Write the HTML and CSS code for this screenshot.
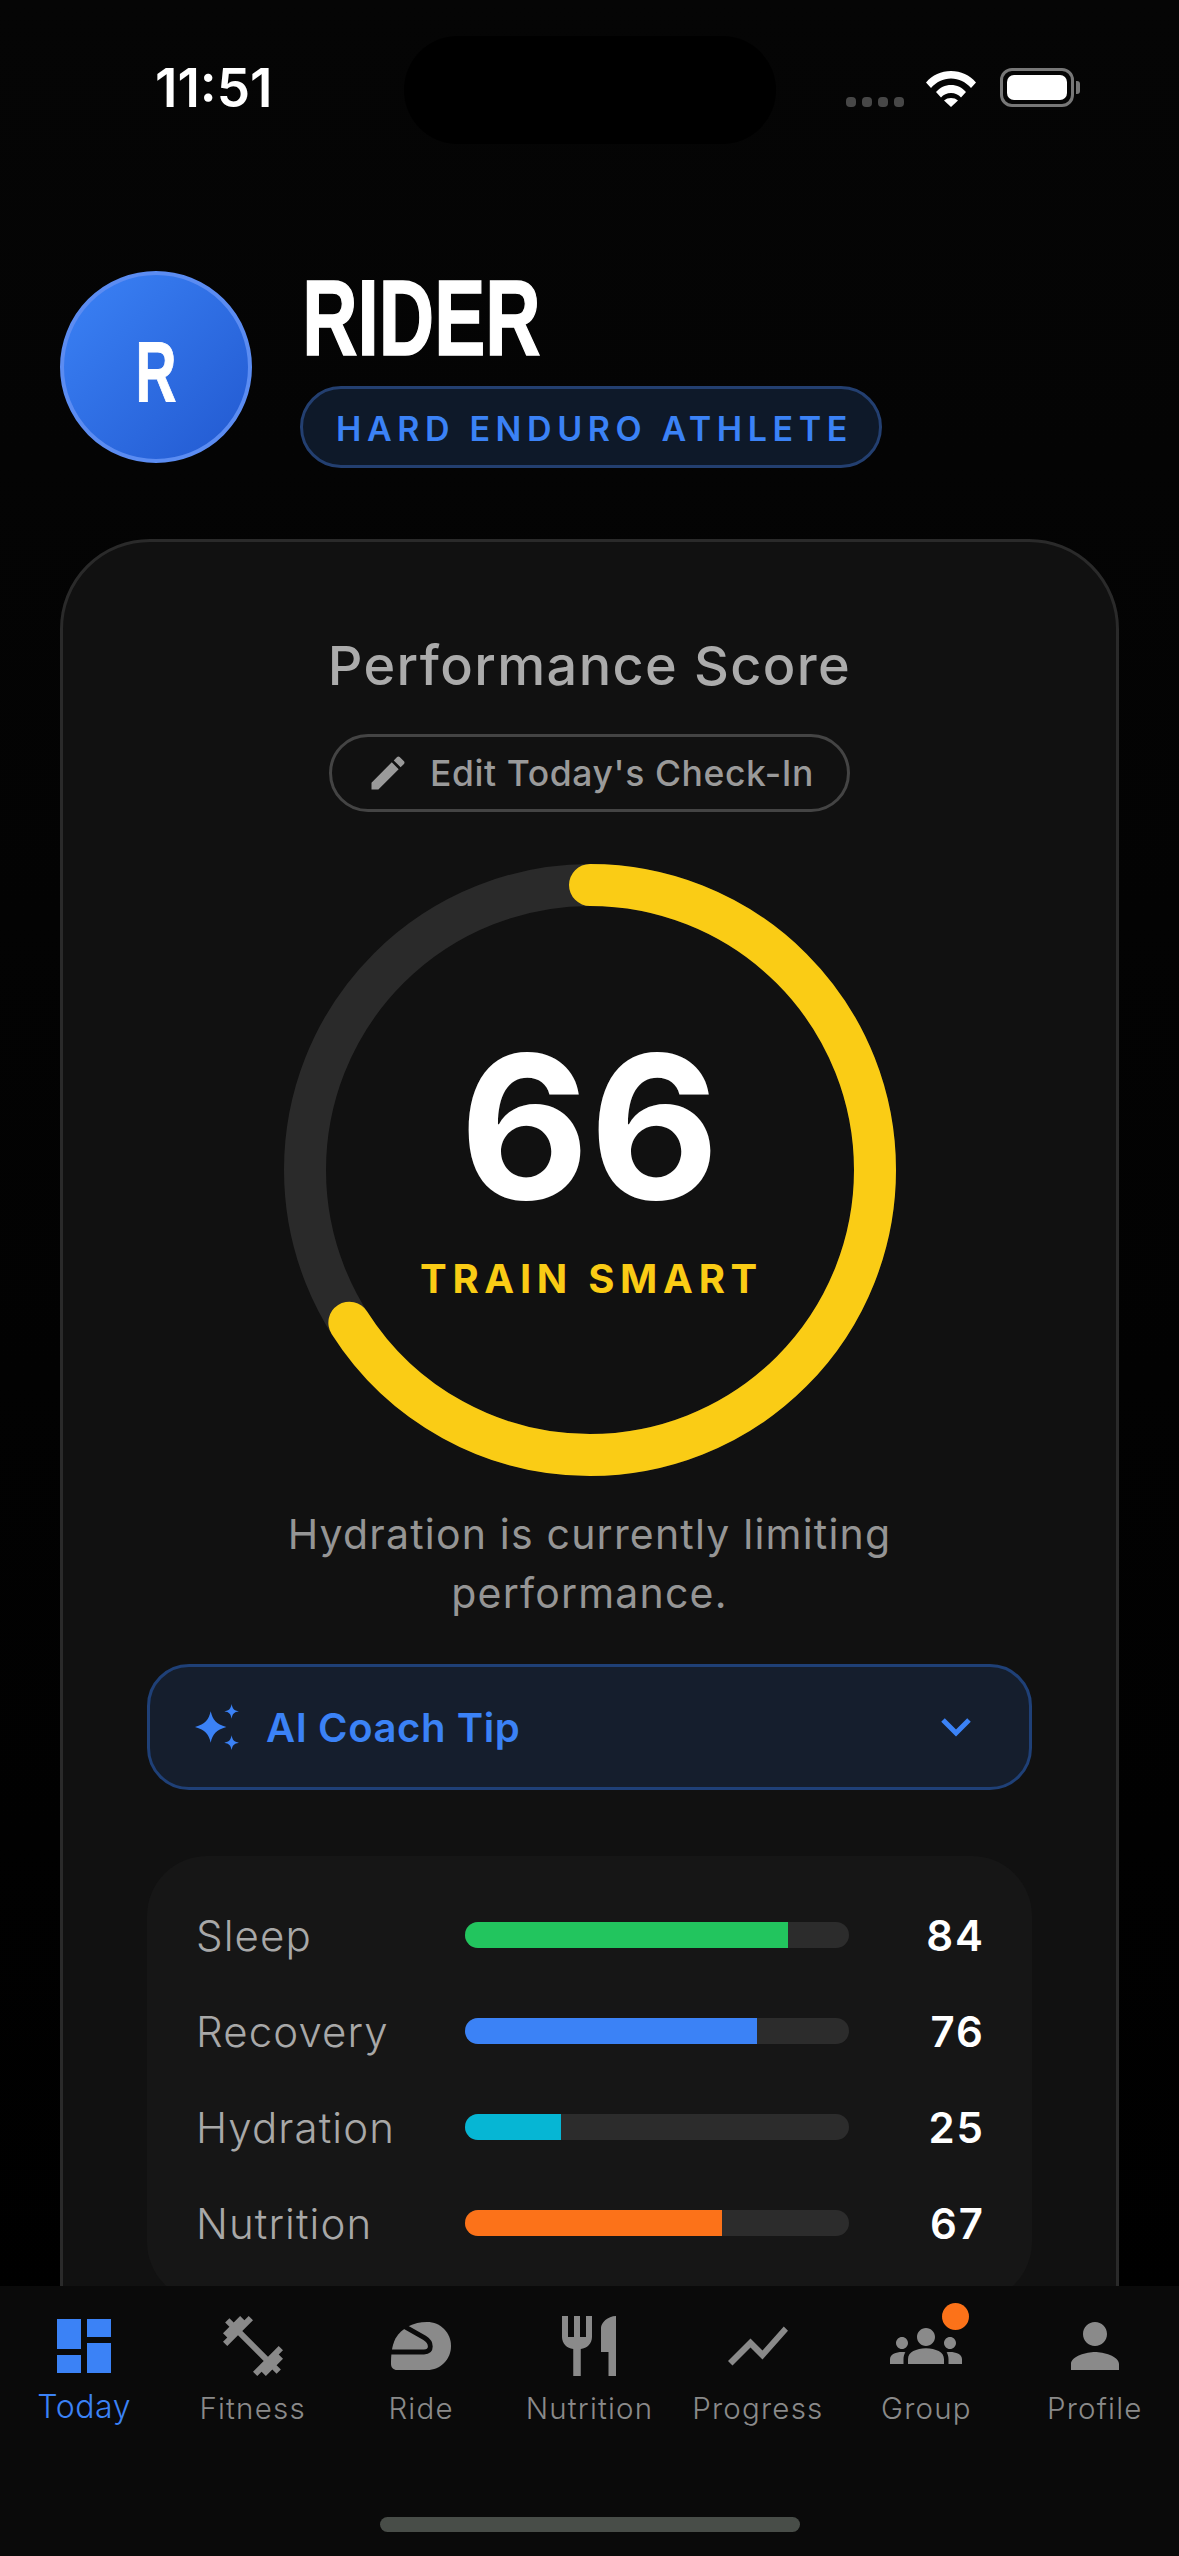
FILE: index.html
```html
<!DOCTYPE html>
<html lang="en">
<head>
    <meta charset="UTF-8">
    <meta name="viewport" content="width=device-width, initial-scale=1.0">
    <title>Today</title>
    <link rel="stylesheet" href="styles.css">
</head>
<body>

<div class="phone">
    <div class="status-bar">
        <div class="status-time">11:51</div>
        <div class="status-island"></div>
        <div class="status-icons">
            <div class="signal-dots"><span></span><span></span><span></span><span></span></div>
            <svg class="wifi" viewBox="0 0 50 37">
                <path d="M0 12.500C6.500 5 15 1 25 1s18.500 4 25 11.500l-5 5.500C39.500 12 33 8.500 25 8.500S10.500 12 5 18z" fill="#fff"/>
                <path d="M10 22c4-4.500 9-7 15-7s11 2.500 15 7l-5 5.500c-2.500-3-6-4.500-10-4.500s-7.500 1.500-10 4.500z" fill="#fff"/>
                <path d="M18 30.500c2-1.700 4.300-2.500 7-2.500s5 .8 7 2.500L25 37z" fill="#fff"/>
            </svg>
            <div class="battery"><div class="battery-level"></div></div>
            <div class="battery-nub"></div>
        </div>
    </div>

    <div class="header">
        <div class="avatar"><span>R</span></div>
        <div class="header-text">
            <div class="rider-name">RIDER</div>
            <div class="rider-badge">HARD ENDURO ATHLETE</div>
        </div>
    </div>

    <div class="score-card">
        <div class="score-title">Performance Score</div>
        <button class="edit-button">
            <svg viewBox="0 0 24 24"><path d="M3 17.250V21h3.750L17.810 9.940l-3.750-3.750L3 17.250zM20.710 7.040c.39-.39.39-1.020 0-1.410l-2.340-2.340c-.39-.39-1.020-.39-1.410 0l-1.830 1.830 3.750 3.750 1.830-1.830z"/></svg>
            <span>Edit Today's Check-In</span>
        </button>

        <div class="score-ring">
            <svg viewBox="0 0 612 612">
                <circle class="ring-track" cx="306" cy="306" r="285"/>
                <circle class="ring-value" cx="306" cy="306" r="285" pathLength="100" stroke-dasharray="66 100" transform="rotate(-90 306 306)"/>
            </svg>
            <div class="ring-text">
                <div class="ring-number">66</div>
                <div class="ring-label">TRAIN SMART</div>
            </div>
        </div>

        <div class="score-note">Hydration is currently limiting<br>performance.</div>

        <div class="coach-tip">
            <svg class="coach-star" viewBox="0 0 44 44">
                <path d="M15 7c2 8.500 5 12 15 15-10 3-13 6.500-15 15-2-8.500-5-12-15-15 10-3 13-6.500 15-15z"/>
                <path d="M35 0c.9 4.700 2.300 6.100 7 7-4.700.9-6.100 2.300-7 7-.9-4.700-2.300-6.100-7-7 4.700-.9 6.100-2.300 7-7z"/>
                <path d="M35 30c.9 4.700 2.300 6.100 7 7-4.700.9-6.100 2.300-7 7-.9-4.700-2.300-6.100-7-7 4.700-.9 6.100-2.300 7-7z"/>
            </svg>
            <span class="coach-label">AI Coach Tip</span>
            <svg class="coach-chevron" viewBox="0 0 30 20"><path d="M2 3l13 13L28 3"/></svg>
        </div>

        <div class="metrics">
            <div class="metric-row">
                <div class="metric-name">Sleep</div>
                <div class="metric-bar"><div class="metric-fill fill-green" style="width: 84%"></div></div>
                <div class="metric-value">84</div>
            </div>
            <div class="metric-row">
                <div class="metric-name">Recovery</div>
                <div class="metric-bar"><div class="metric-fill fill-blue" style="width: 76%"></div></div>
                <div class="metric-value">76</div>
            </div>
            <div class="metric-row">
                <div class="metric-name">Hydration</div>
                <div class="metric-bar"><div class="metric-fill fill-cyan" style="width: 25%"></div></div>
                <div class="metric-value">25</div>
            </div>
            <div class="metric-row">
                <div class="metric-name">Nutrition</div>
                <div class="metric-bar"><div class="metric-fill fill-orange" style="width: 67%"></div></div>
                <div class="metric-value">67</div>
            </div>
        </div>
    </div>

    <div class="tab-bar">
        <div class="tab-items">
            <div class="tab active">
                <svg viewBox="0 0 24 24"><path d="M3 13h8V3H3v10zm0 8h8v-6H3v6zm10 0h8V11h-8v10zm0-18v6h8V3h-8z"/></svg>
                <span>Today</span>
            </div>
            <div class="tab">
                <svg viewBox="0 0 24 24"><path d="M20.570 14.860L22 13.430 20.570 12 17 15.570 8.430 7 12 3.430 10.570 2 9.140 3.430 7.710 2 5.570 4.140 4.140 2.710 2.710 4.140l1.430 1.430L2 7.710l1.430 1.430L2 10.570 3.430 12 7 8.430 15.570 17 12 20.570 13.430 22l1.430-1.430L16.290 22l2.140-2.140 1.430 1.430 1.430-1.430-1.430-1.430L22 16.290z"/></svg>
                <span>Fitness</span>
            </div>
            <div class="tab">
                <svg viewBox="0 0 24 24">
                    <path d="M2 18c0-3 .2-6 1.500-8.500C5.500 6 9.500 4 14 4c4.500 0 8 3.500 8 8s-3.500 8-8 8H4c-1.200 0-2-.8-2-2z"/>
                    <path class="helmet-gap" d="M6 5.200l7.200 4.100c1.300.8 1.900 1.800 1.900 2.900 0 1.300-.9 1.800-2.100 1.800H1"/>
                </svg>
                <span>Ride</span>
            </div>
            <div class="tab">
                <svg viewBox="0 0 24 24"><path d="M11 9H9V2H7v7H5V2H3v7c0 2.120 1.660 3.840 3.750 3.970V22h2.500v-9.030C11.340 12.840 13 11.120 13 9V2h-2v7zm5-3v8h2.500v8H21V2c-2.760 0-5 2.240-5 4z"/></svg>
                <span>Nutrition</span>
            </div>
            <div class="tab">
                <svg viewBox="0 0 24 24"><path d="M3.500 18.490l6-6.010 4 4L22 6.920l-1.410-1.410-7.090 7.970-4-4L2 16.990z"/></svg>
                <span>Progress</span>
            </div>
            <div class="tab">
                <svg viewBox="0 0 24 24"><path d="M12 12.750c1.630 0 3.070.39 4.240.9 1.080.48 1.760 1.560 1.760 2.730V18H6v-1.610c0-1.180.68-2.260 1.760-2.730 1.170-.52 2.610-.91 4.240-.91zM4 13c1.100 0 2-.9 2-2s-.9-2-2-2-2 .9-2 2 .9 2 2 2zm1.130 1.100c-.37-.06-.74-.1-1.130-.1-.99 0-1.930.21-2.780.58C.48 14.900 0 15.620 0 16.430V18h4.500v-1.610c0-.83.23-1.610.63-2.290zM20 13c1.100 0 2-.9 2-2s-.9-2-2-2-2 .9-2 2 .9 2 2 2zm4 3.430c0-.81-.48-1.530-1.220-1.850-.85-.37-1.790-.58-2.780-.58-.39 0-.76.04-1.130.1.4.68.63 1.460.63 2.290V18H24v-1.570zM12 12c1.660 0 3-1.340 3-3s-1.340-3-3-3-3 1.340-3 3 1.340 3 3 3z"/></svg>
                <div class="tab-dot"></div>
                <span>Group</span>
            </div>
            <div class="tab">
                <svg viewBox="0 0 24 24"><path d="M12 12c2.210 0 4-1.790 4-4s-1.790-4-4-4-4 1.790-4 4 1.790 4 4 4zm0 2c-2.670 0-8 1.340-8 4v2h16v-2c0-2.660-5.330-4-8-4z"/></svg>
                <span>Profile</span>
            </div>
        </div>
        <div class="home-indicator"></div>
    </div>
</div>

</body>
</html>
```

FILE: styles.css
```css
* {
    box-sizing: border-box;
}

body {
    margin: 0;
    background-color: #000;
    font-family: Inter, "Noto Sans", sans-serif;
}

.phone {
    position: relative;
    width: 1179px;
    height: 2556px;
    overflow: hidden;
    background: linear-gradient(#050505, #000 2300px);
}

/* Status bar */
.status-bar {
    position: relative;
    display: flex;
    justify-content: space-between;
    height: 143px;
    padding: 60px 99px 0 155px;
    color: white;
}

.status-time {
    font-size: 53px;
    font-weight: 600;
    line-height: 56px;
}

.status-island {
    position: absolute;
    left: 404px;
    top: 36px;
    width: 372px;
    height: 108px;
    border-radius: 54px;
    background-color: #000;
}

.status-icons {
    display: flex;
    align-items: flex-end;
    height: 47px;
}

.signal-dots {
    display: flex;
    gap: 6px;
    margin-right: 22px;
}

.signal-dots span {
    width: 10px;
    height: 10px;
    border-radius: 4px;
    background-color: #474747;
}

.wifi {
    width: 50px;
    height: 37px;
    margin-right: 24px;
}

.battery {
    width: 74px;
    height: 39px;
    padding: 4px;
    border: 3px solid #777;
    border-radius: 12px;
}

.battery-level {
    height: 100%;
    border-radius: 7px;
    background-color: white;
}

.battery-nub {
    width: 4px;
    height: 13px;
    margin: 0 0 13px 2px;
    border-radius: 0 3px 3px 0;
    background-color: #777;
}

/* Header with avatar */
.header {
    display: flex;
    gap: 48px;
    align-items: flex-start;
    margin-top: 128px;
    padding: 0 60px;
}

.avatar {
    display: flex;
    align-items: center;
    justify-content: center;
    width: 192px;
    height: 192px;
    border: 4px solid #5b8cf2;
    border-radius: 50%;
    background: linear-gradient(135deg, #3b82f6, #2259d0);
    color: white;
    font-family: "Liberation Sans", sans-serif;
    font-size: 86px;
    font-weight: 700;
}

.avatar span {
    padding-top: 8px;
    transform: scaleX(0.66);
    -webkit-text-stroke: 1px white;
}

.header-text {
    display: flex;
    flex-direction: column;
    align-items: flex-start;
}

.rider-name {
    height: 115px;
    padding-left: 3px;
    color: white;
    font-family: "Liberation Sans", sans-serif;
    font-size: 108px;
    font-weight: 700;
    line-height: 94px;
    transform: scaleX(0.71);
    transform-origin: left center;
    -webkit-text-stroke: 1.5px white;
}

.rider-badge {
    display: flex;
    align-items: center;
    height: 82px;
    padding: 2px 26px 0 33px;
    border: 3px solid #233f70;
    border-radius: 41px;
    background-color: #0e1929;
    color: #3b82f6;
    font-size: 34px;
    font-weight: 600;
    letter-spacing: 5.6px;
    white-space: nowrap;
}

/* Score card */
.score-card {
    display: flex;
    flex-direction: column;
    align-items: center;
    height: 1900px;
    margin: 71px 60px 0;
    padding-top: 91px;
    border: 3px solid #2a2a2a;
    border-radius: 90px;
    background-color: #111;
}

.score-title {
    color: #ababab;
    font-size: 54px;
    font-weight: 500;
    line-height: 66px;
    letter-spacing: 1.4px;
}

.edit-button {
    display: flex;
    gap: 20px;
    align-items: center;
    height: 78px;
    margin-top: 35px;
    padding: 0 33px 0 34px;
    border: 3px solid #444;
    border-radius: 39px;
    background: none;
    color: #9a9a9a;
    font-family: inherit;
    font-size: 35.5px;
    font-weight: 500;
    letter-spacing: 0.6px;
}

.edit-button svg {
    width: 44px;
    height: 44px;
    fill: #9a9a9a;
}

.score-ring {
    display: grid;
    justify-items: center;
    align-items: center;
    width: 612px;
    height: 612px;
    margin-top: 52px;
}

.score-ring svg,
.ring-text {
    grid-area: 1 / 1;
}

.score-ring svg {
    width: 612px;
    height: 612px;
}

.ring-track,
.ring-value {
    fill: none;
    stroke-width: 42;
}

.ring-track {
    stroke: #2a2a2a;
}

.ring-value {
    stroke: #facc15;
    stroke-linecap: round;
}

.ring-text {
    display: flex;
    flex-direction: column;
    align-items: center;
    padding-bottom: 10px;
}

.ring-number {
    color: white;
    font-size: 200px;
    font-weight: 700;
    line-height: 200px;
}

.ring-label {
    margin-top: 28px;
    padding-left: 4px;
    color: #facc15;
    font-size: 40px;
    font-weight: 700;
    line-height: 50px;
    letter-spacing: 5.7px;
}

.score-note {
    margin-top: 29px;
    color: #959595;
    font-size: 41px;
    line-height: 59px;
    letter-spacing: 1.2px;
    text-align: center;
}

.coach-tip {
    display: flex;
    align-items: center;
    width: 885px;
    height: 126px;
    margin-top: 41px;
    padding: 0 58px 0 45px;
    border: 3px solid #1f4077;
    border-radius: 42px;
    background-color: #151e2d;
}

.coach-star {
    width: 46px;
    height: 46px;
    fill: #3b82f6;
}

.coach-label {
    flex: 1;
    margin-left: 25px;
    color: #3b82f6;
    font-size: 40px;
    font-weight: 600;
    letter-spacing: 0.6px;
}

.coach-chevron {
    width: 30px;
    height: 20px;
    fill: none;
    stroke: #3b82f6;
    stroke-width: 5;
}

/* Metrics */
.metrics {
    width: 885px;
    margin-top: 66px;
    padding: 31px 47px 31px 49px;
    border-radius: 60px;
    background-color: #161616;
}

.metric-row {
    display: flex;
    align-items: center;
    height: 96px;
}

.metric-name {
    width: 269px;
    color: #a8a8a8;
    font-size: 42px;
    font-weight: 300;
    letter-spacing: 1.1px;
}

.metric-bar {
    flex: 1;
    height: 26px;
    border-radius: 13px;
    background-color: #2c2c2c;
    overflow: hidden;
}

.metric-fill {
    height: 100%;
}

.fill-green {
    background-color: #22c55e;
}

.fill-blue {
    background-color: #3b82f6;
}

.fill-cyan {
    background-color: #06b6d4;
}

.fill-orange {
    background-color: #fc7219;
}

.metric-value {
    width: 136px;
    color: white;
    font-size: 42px;
    font-weight: 600;
    letter-spacing: 2px;
    text-align: right;
}

/* Bottom tabs */
.tab-bar {
    position: absolute;
    left: 0;
    right: 0;
    bottom: 0;
    height: 270px;
    background-color: #0a0a0a;
}

.tab-items {
    display: grid;
    grid-template-columns: repeat(7, 1fr);
    padding-top: 24px;
}

.tab {
    position: relative;
    display: flex;
    flex-direction: column;
    align-items: center;
    color: #8a8a8a;
    font-size: 29.5px;
    font-weight: 300;
    line-height: 36px;
    letter-spacing: 1.2px;
}

.tab svg {
    width: 72px;
    height: 72px;
    fill: #8a8a8a;
}

.tab span {
    margin-top: 8px;
}

.tab.active {
    color: #3b82f6;
}

.tab.active svg {
    fill: #3b82f6;
}

.tab.active span {
    margin-top: 7px;
    font-size: 32px;
    letter-spacing: 0.6px;
}

.helmet-gap {
    fill: none;
    stroke: #0a0a0a;
    stroke-width: 1.6;
}

.tab-dot {
    position: absolute;
    top: -7px;
    left: 100px;
    width: 27px;
    height: 27px;
    border-radius: 50%;
    background-color: #fc7219;
}

.home-indicator {
    position: absolute;
    left: 380px;
    bottom: 24px;
    width: 420px;
    height: 15px;
    border-radius: 8px;
    background-color: #484d48;
}
```
